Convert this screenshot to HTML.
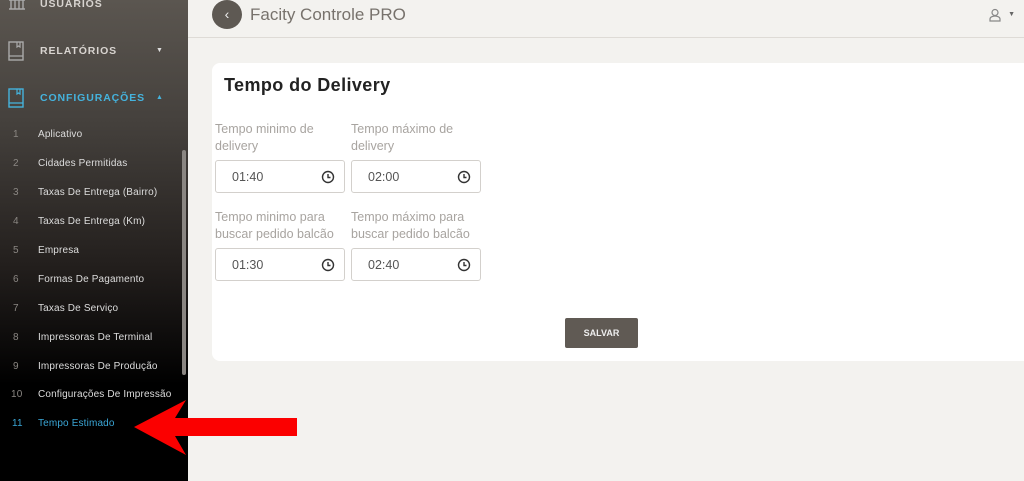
<!DOCTYPE html>
<html><head><meta charset="utf-8"><style>
*{margin:0;padding:0;box-sizing:border-box}
body{width:1024px;height:481px;overflow:hidden;background:#f3f2ef;font-family:"Liberation Sans",sans-serif;position:relative}
.sb{position:absolute;left:0;top:0;width:188px;height:481px;background:linear-gradient(#5b5650 0%,#45413d 25%,#231f1d 55%,#000 80%,#000 100%)}
.sb .h{position:absolute;left:40px;font-size:10.5px;font-weight:bold;color:#d8d4d0;letter-spacing:0.9px}
.sb .car{position:absolute;left:156px;font-size:7px;color:#ddd}
.it{position:absolute;left:0;font-size:10px;color:#ddd;letter-spacing:0.15px}
.it span{position:absolute;left:13px;color:#8b8783}
.it b{position:absolute;left:38px;font-weight:normal;white-space:nowrap}
.scroll{position:absolute;left:182px;top:150px;width:4px;height:225px;background:#8a8682;border-radius:2px}
.top{position:absolute;left:188px;top:0;right:0;height:38px;border-bottom:1px solid #dedbd6}
.back{position:absolute;left:24px;top:0;width:30px;height:29px;border-radius:50%;background:#5e5953;color:#eee;text-align:center;line-height:28px;font-size:14px}
.title{position:absolute;left:62px;top:5px;font-size:17px;color:#77726c}
.card{position:absolute;left:212px;top:63px;width:820px;height:298px;background:#fff;border-radius:8px}
.card h1{position:absolute;left:12px;top:12px;font-size:18px;color:#222;font-weight:bold;letter-spacing:0.4px}
.lab{position:absolute;font-size:12.5px;color:#a8a4a0;line-height:17px}
.inp{position:absolute;width:130px;height:33px;border:1px solid #d3d0cc;border-radius:3px;font-size:12.5px;color:#555}
.inp span{position:absolute;left:16px;top:9px}
.inp svg{position:absolute;right:9px;top:9px}
.btn{position:absolute;left:353px;top:255px;width:73px;height:30px;background:#605a54;color:#eee;font-size:9px;font-weight:bold;text-align:center;line-height:30px;border-radius:2px}
</style></head><body>
<div class="sb">
<svg style="position:absolute;left:8px;top:-4px" width="18" height="16"><path d="M1 4h16M3 4v9M7 4v9M11 4v9M15 4v9M1 13h16" stroke="#aaa" fill="none" stroke-width="1.4"/></svg>
<div class="h" style="top:-2px">USUÁRIOS</div>
<svg style="position:absolute;left:8px;top:41px" width="16" height="20"><rect x="1" y="1" width="14" height="18" fill="none" stroke="#aaa" stroke-width="1.4"/><path d="M1 15h14M9 1v5l1.5-1 1.5 1V1" fill="none" stroke="#aaa" stroke-width="1.2"/></svg>
<div class="h" style="top:45px">RELATÓRIOS</div><div class="car" style="top:47px">▼</div>
<svg style="position:absolute;left:8px;top:88px" width="16" height="20"><rect x="1" y="1" width="14" height="18" fill="none" stroke="#45b3dd" stroke-width="1.4"/><path d="M1 15h14M9 1v5l1.5-1 1.5 1V1" fill="none" stroke="#45b3dd" stroke-width="1.2"/></svg>
<div class="h" style="top:92px;color:#45b3dd">CONFIGURAÇÕES</div><div class="car" style="top:94px;color:#45b3dd">▲</div>
<div class="it" style="top:129px"><span>1</span><b>Aplicativo</b></div>
<div class="it" style="top:158px"><span>2</span><b>Cidades Permitidas</b></div>
<div class="it" style="top:187px"><span>3</span><b>Taxas De Entrega (Bairro)</b></div>
<div class="it" style="top:216px"><span>4</span><b>Taxas De Entrega (Km)</b></div>
<div class="it" style="top:245px"><span>5</span><b>Empresa</b></div>
<div class="it" style="top:274px"><span>6</span><b>Formas De Pagamento</b></div>
<div class="it" style="top:303px"><span>7</span><b>Taxas De Serviço</b></div>
<div class="it" style="top:332px"><span>8</span><b>Impressoras De Terminal</b></div>
<div class="it" style="top:361px"><span>9</span><b>Impressoras De Produção</b></div>
<div class="it" style="top:389px"><span style="left:11px">10</span><b>Configurações De Impressão</b></div>
<div class="it" style="top:418px;color:#3aa6d6"><span style="left:12px;color:#3aa6d6">11</span><b>Tempo Estimado</b></div>
<div class="scroll"></div>
</div>
<div class="top"><div class="back">‹</div><div class="title">Facity Controle PRO</div>
<svg style="position:absolute;right:22px;top:8px" width="14" height="14"><circle cx="7" cy="4.5" r="3" fill="none" stroke="#888" stroke-width="1.2"/><path d="M2 13v-2a5 3 0 0 1 10 0v2z" fill="none" stroke="#888" stroke-width="1.2"/></svg>
<div style="position:absolute;right:9px;top:11px;font-size:7px;color:#666">▼</div></div>
<div class="card"><h1>Tempo do Delivery</h1>
<div class="lab" style="left:3px;top:58px">Tempo minimo de<br>delivery</div>
<div class="lab" style="left:139px;top:58px">Tempo máximo de<br>delivery</div>
<div class="inp" style="left:3px;top:97px"><span>01:40</span><svg width="14" height="14"><circle cx="7" cy="7" r="5.5" fill="none" stroke="#333" stroke-width="1.4"/><path d="M7 4v3.5h2.5" fill="none" stroke="#333" stroke-width="1.4"/></svg></div>
<div class="inp" style="left:139px;top:97px"><span>02:00</span><svg width="14" height="14"><circle cx="7" cy="7" r="5.5" fill="none" stroke="#333" stroke-width="1.4"/><path d="M7 4v3.5h2.5" fill="none" stroke="#333" stroke-width="1.4"/></svg></div>
<div class="lab" style="left:3px;top:146px">Tempo minimo para<br>buscar pedido balcão</div>
<div class="lab" style="left:139px;top:146px">Tempo máximo para<br>buscar pedido balcão</div>
<div class="inp" style="left:3px;top:185px"><span>01:30</span><svg width="14" height="14"><circle cx="7" cy="7" r="5.5" fill="none" stroke="#333" stroke-width="1.4"/><path d="M7 4v3.5h2.5" fill="none" stroke="#333" stroke-width="1.4"/></svg></div>
<div class="inp" style="left:139px;top:185px"><span>02:40</span><svg width="14" height="14"><circle cx="7" cy="7" r="5.5" fill="none" stroke="#333" stroke-width="1.4"/><path d="M7 4v3.5h2.5" fill="none" stroke="#333" stroke-width="1.4"/></svg></div>
<div class="btn">SALVAR</div>
</div>
<svg style="position:absolute;left:0;top:0" width="1024" height="481"><path d="M134 427L186 400L175 418H297V436H175L186 455Z" fill="#fb0000"/></svg>
</body></html>
